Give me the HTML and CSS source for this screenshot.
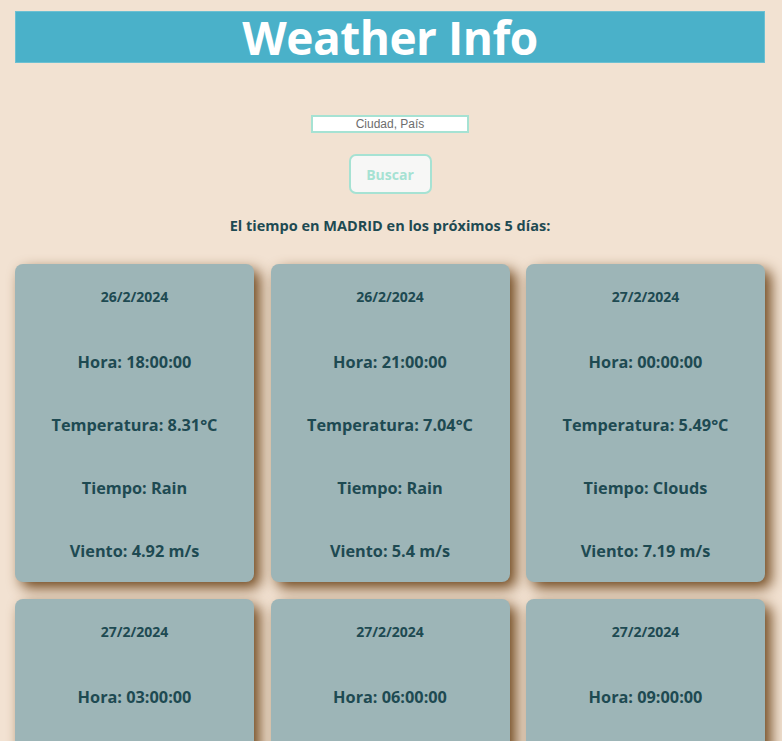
FILE: index.html
```html
<!DOCTYPE html>
<html lang="es">
<head>
<meta charset="utf-8">
<title>Weather Info</title>
<link rel="stylesheet" href="styles.css">
</head>
<body>
<div class="page">
  <header class="header">
    <h1 class="title">Weather Info</h1>
  </header>
  <form class="search">
    <input class="city" type="text" placeholder="Ciudad, País">
    <button class="btn" type="button">Buscar</button>
  </form>
  <p class="summary">El tiempo en MADRID en los próximos 5 días:</p>
  <div class="grid">
    <div class="card">
      <div class="date">26/2/2024</div>
      <div class="line">Hora: 18:00:00</div>
      <div class="line">Temperatura: 8.31°C</div>
      <div class="line">Tiempo: Rain</div>
      <div class="line">Viento: 4.92 m/s</div>
    </div>
    <div class="card">
      <div class="date">26/2/2024</div>
      <div class="line">Hora: 21:00:00</div>
      <div class="line">Temperatura: 7.04°C</div>
      <div class="line">Tiempo: Rain</div>
      <div class="line">Viento: 5.4 m/s</div>
    </div>
    <div class="card">
      <div class="date">27/2/2024</div>
      <div class="line">Hora: 00:00:00</div>
      <div class="line">Temperatura: 5.49°C</div>
      <div class="line">Tiempo: Clouds</div>
      <div class="line">Viento: 7.19 m/s</div>
    </div>
    <div class="card">
      <div class="date">27/2/2024</div>
      <div class="line">Hora: 03:00:00</div>
      <div class="line">Temperatura: 3.87°C</div>
      <div class="line">Tiempo: Clouds</div>
      <div class="line">Viento: 6.02 m/s</div>
    </div>
    <div class="card">
      <div class="date">27/2/2024</div>
      <div class="line">Hora: 06:00:00</div>
      <div class="line">Temperatura: 3.12°C</div>
      <div class="line">Tiempo: Clouds</div>
      <div class="line">Viento: 5.11 m/s</div>
    </div>
    <div class="card">
      <div class="date">27/2/2024</div>
      <div class="line">Hora: 09:00:00</div>
      <div class="line">Temperatura: 6.25°C</div>
      <div class="line">Tiempo: Clouds</div>
      <div class="line">Viento: 4.40 m/s</div>
    </div>
  </div>
</div>
</body>
</html>
```

FILE: styles.css
```css
html, body {
  margin: 0;
  padding: 0;
  background: #f2e2d2;
}

body {
  font-family: "Open Sans", "Noto Sans", sans-serif;
  color: #1e4a52;
}

.page {
  padding: 11px 17px 40px 15px;
}

.header {
  background: #4ab1c9;
  border: 1px solid #6cc0d2;
  height: 50px;
  display: flex;
  align-items: center;
  justify-content: center;
}

.title {
  margin: 0;
  color: #ffffff;
  font-size: 46px;
  font-weight: 700;
  line-height: 50px;
  letter-spacing: -0.5px;
}

.search {
  margin-top: 52px;
  display: flex;
  flex-direction: column;
  align-items: center;
  gap: 21px;
}

.city {
  box-sizing: border-box;
  width: 158px;
  height: 18px;
  border: 2px solid #a6e2d3;
  background: #ffffff;
  padding: 0 4px;
  text-align: center;
  font-family: "Liberation Sans", Arial, sans-serif;
  font-size: 12px;
  color: #555;
  outline: none;
}

.city::placeholder {
  color: #6d6d6d;
}

.btn {
  box-sizing: border-box;
  width: 83px;
  height: 40px;
  background: #f7f7f6;
  border: 2px solid #a6e2d3;
  border-radius: 7px;
  color: #a6e2d3;
  font-family: "Open Sans", "Noto Sans", sans-serif;
  font-weight: 700;
  font-size: 14px;
  padding: 1px 0 0;
}

.summary {
  margin: 23px 0 0;
  text-align: center;
  font-weight: 700;
  font-size: 14.5px;
  line-height: 18px;
}

.grid {
  margin-top: 29px;
  display: grid;
  grid-template-columns: repeat(3, 1fr);
  column-gap: 16.5px;
  row-gap: 17px;
}

.card {
  box-sizing: border-box;
  height: 318px;
  background: #9db5b7;
  border-radius: 8px;
  box-shadow: 6px 6px 14px rgb(112, 72, 30);
  padding: 24px 8px 20px;
  display: flex;
  flex-direction: column;
  align-items: center;
  text-align: center;
  gap: 39px;
}

.date {
  font-size: 14px;
  font-weight: 700;
  line-height: 18px;
  margin-bottom: 5px;
}

.line {
  font-size: 16.3px;
  font-weight: 700;
  line-height: 24px;
}
```
